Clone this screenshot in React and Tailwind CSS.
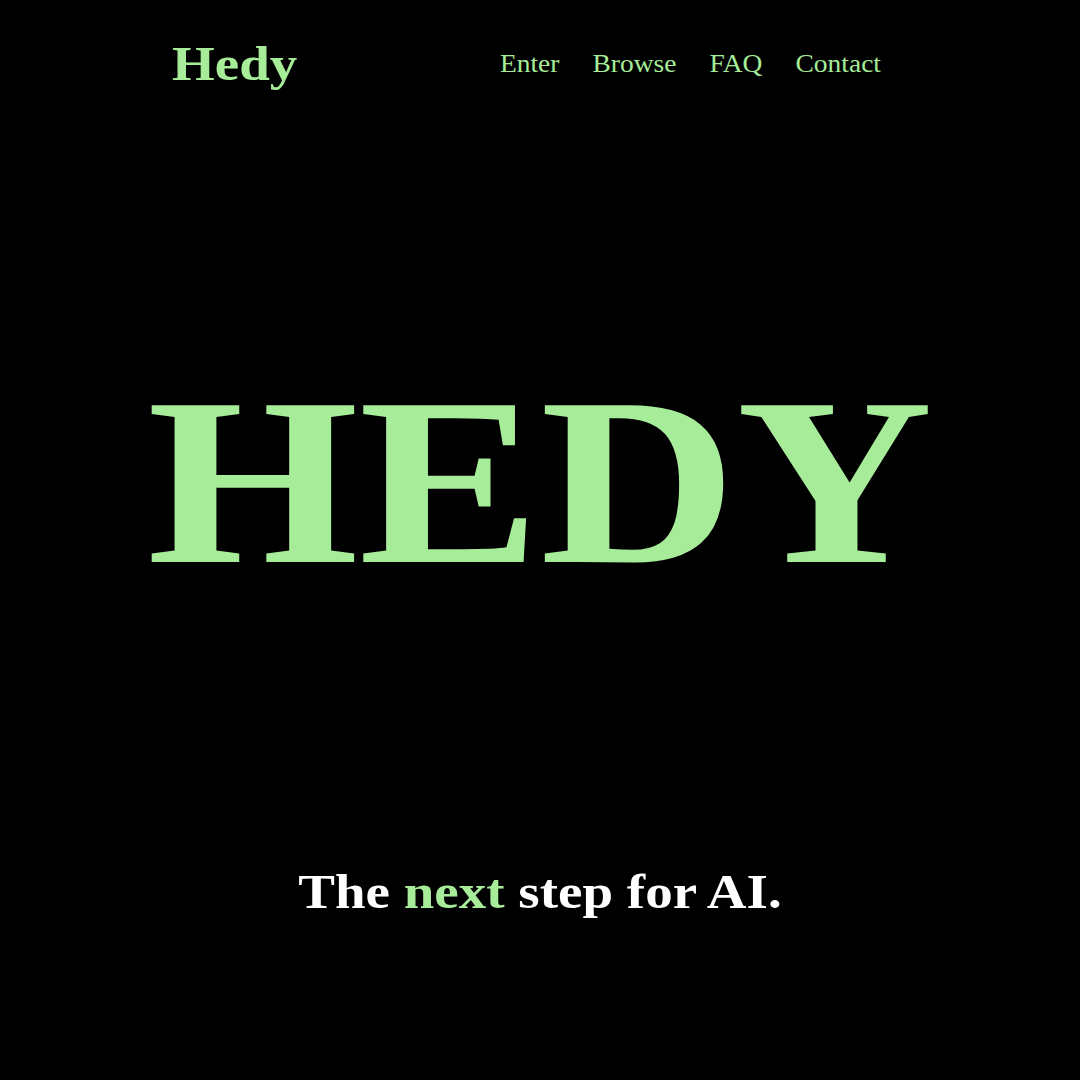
const serif = "font-['Liberation_Serif','Times_New_Roman',serif]";

function Header() {
  const links = ["Enter", "Browse", "FAQ", "Contact"];
  return (
    <header className="flex h-[128px] items-center justify-between pl-[172px] pr-[199px]">
      <a href="#" className="scale-y-[0.88] text-[55px] font-bold text-[#a6ec99]">
        Hedy
      </a>
      <nav className="flex scale-y-[0.88] items-center gap-[33px] text-[27.5px] text-[#a6ec99]">
        {links.map((l) => (
          <a key={l} href="#">
            {l}
          </a>
        ))}
      </nav>
    </header>
  );
}

export default function App() {
  return (
    <div className={`min-h-screen bg-black ${serif}`}>
      <Header />
      <main className="flex flex-col items-center pb-[161px]">
        <h1 className="mt-[218px] scale-y-[0.88] text-[272px] font-bold leading-none text-[#a6ec99]">
          HEDY
        </h1>
        <p className="mt-[246px] scale-y-[0.88] text-[55px] font-bold leading-none text-white">
          The <span className="text-[#a6ec99]">next</span> step for AI.
        </p>
      </main>
    </div>
  );
}
